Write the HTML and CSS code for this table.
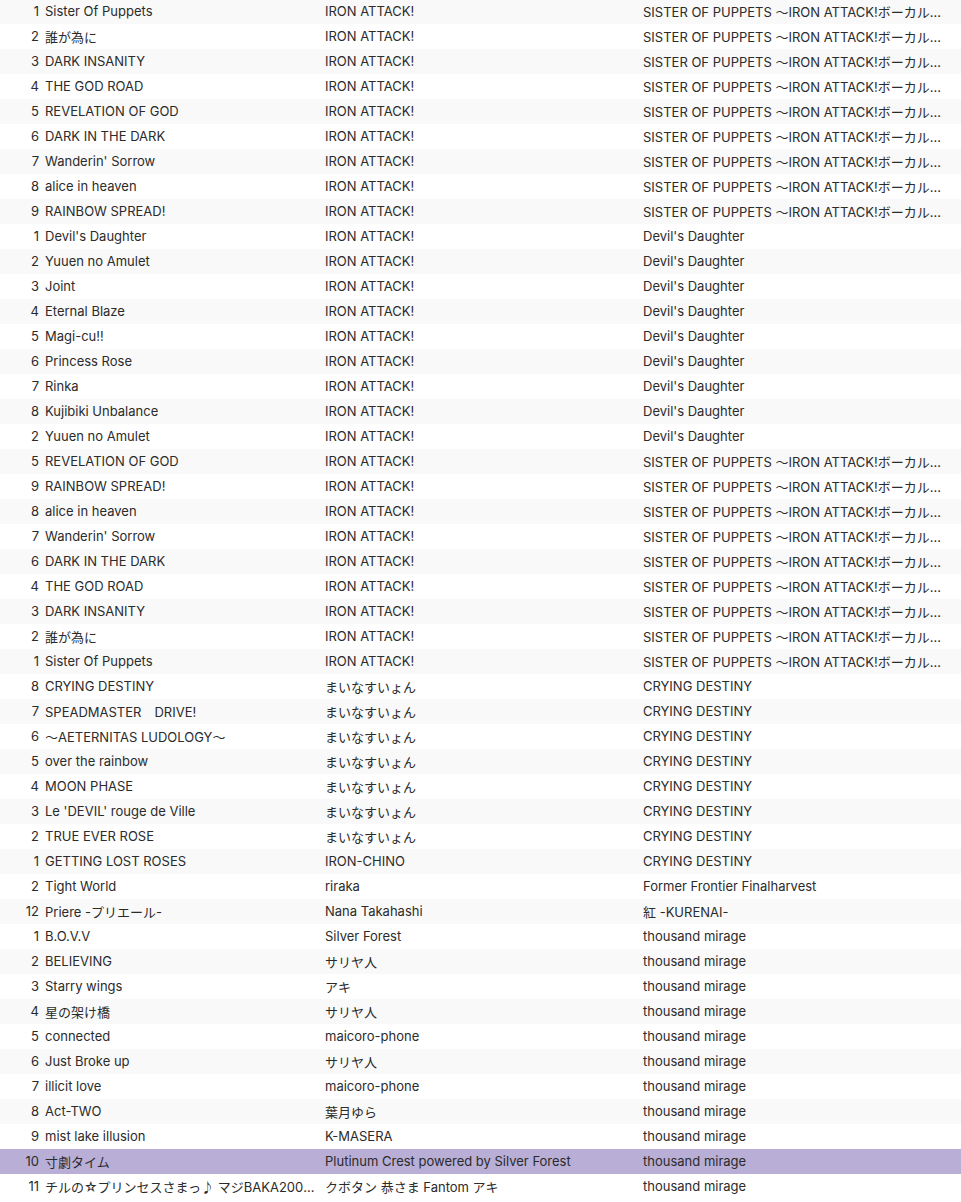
FILE: index.html
```html
<!DOCTYPE html>
<html>

<head>
    <title>Tracks</title>
    <link rel="stylesheet" href="styles.css">
</head>

<body>
    <div class="track-list" id="tracks"></div>

    <script>
        const SOP = 'SISTER OF PUPPETS 〜IRON ATTACK!ボーカルベスト〜';
        const DD = "Devil's Daughter";
        const CD = 'CRYING DESTINY';
        const TM = 'thousand mirage';
        const IA = 'IRON ATTACK!';
        const MI = 'まいなすいょん';

        // [number, title, artist, album]
        const tracks = [
            [1, 'Sister Of Puppets', IA, SOP],
            [2, '誰が為に', IA, SOP],
            [3, 'DARK INSANITY', IA, SOP],
            [4, 'THE GOD ROAD', IA, SOP],
            [5, 'REVELATION OF GOD', IA, SOP],
            [6, 'DARK IN THE DARK', IA, SOP],
            [7, "Wanderin' Sorrow", IA, SOP],
            [8, 'alice in heaven', IA, SOP],
            [9, 'RAINBOW SPREAD!', IA, SOP],
            [1, "Devil's Daughter", IA, DD],
            [2, 'Yuuen no Amulet', IA, DD],
            [3, 'Joint', IA, DD],
            [4, 'Eternal Blaze', IA, DD],
            [5, 'Magi-cu!!', IA, DD],
            [6, 'Princess Rose', IA, DD],
            [7, 'Rinka', IA, DD],
            [8, 'Kujibiki Unbalance', IA, DD],
            [2, 'Yuuen no Amulet', IA, DD],
            [5, 'REVELATION OF GOD', IA, SOP],
            [9, 'RAINBOW SPREAD!', IA, SOP],
            [8, 'alice in heaven', IA, SOP],
            [7, "Wanderin' Sorrow", IA, SOP],
            [6, 'DARK IN THE DARK', IA, SOP],
            [4, 'THE GOD ROAD', IA, SOP],
            [3, 'DARK INSANITY', IA, SOP],
            [2, '誰が為に', IA, SOP],
            [1, 'Sister Of Puppets', IA, SOP],
            [8, 'CRYING DESTINY', MI, CD],
            [7, 'SPEADMASTER　DRIVE!', MI, CD],
            [6, '〜AETERNITAS LUDOLOGY〜', MI, CD],
            [5, 'over the rainbow', MI, CD],
            [4, 'MOON PHASE', MI, CD],
            [3, "Le 'DEVIL' rouge de Ville", MI, CD],
            [2, 'TRUE EVER ROSE', MI, CD],
            [1, 'GETTING LOST ROSES', 'IRON-CHINO', CD],
            [2, 'Tight World', 'riraka', 'Former Frontier Finalharvest'],
            [12, 'Priere -プリエール-', 'Nana Takahashi', '紅 -KURENAI-'],
            [1, 'B.O.V.V', 'Silver Forest', TM],
            [2, 'BELIEVING', 'サリヤ人', TM],
            [3, 'Starry wings', 'アキ', TM],
            [4, '星の架け橋', 'サリヤ人', TM],
            [5, 'connected', 'maicoro-phone', TM],
            [6, 'Just Broke up', 'サリヤ人', TM],
            [7, 'illicit love', 'maicoro-phone', TM],
            [8, 'Act-TWO', '葉月ゆら', TM],
            [9, 'mist lake illusion', 'K-MASERA', TM],
            [10, '寸劇タイム', 'Plutinum Crest powered by Silver Forest', TM],
            [11, 'チルの☆プリンセスさまっ♪ マジBAKA2000%', 'クボタン 恭さま Fantom アキ', TM]
        ];

        const current = 46;
        const list = document.getElementById('tracks');

        tracks.forEach((t, i) => {
            const row = document.createElement('div');
            row.className = 'track' + (i === current ? ' playing' : '');
            row.innerHTML = `
                <span class="num">${t[0]}</span>
                <span class="cell">${t[1]}</span>
                <span class="cell">${t[2]}</span>
                <span class="cell album">${t[3]}</span>
            `;
            list.appendChild(row);
        });
    </script>
</body>

</html>
```

FILE: styles.css
```css
body {
    margin: 0;
    font-family: Inter, "Noto Sans CJK JP", sans-serif;
    font-size: 13px;
    color: #2b2b2b;
    background: #ffffff;
}

.track-list {
    margin-top: -1px;
}

.track {
    display: grid;
    grid-template-columns: 39px 280px 318px 1fr;
    box-sizing: border-box;
    height: 25px;
    padding-bottom: 1px;
    align-items: center;
}

.track:nth-child(odd) {
    background-color: #f9f9f9;
}

.track.playing {
    background-color: #b8aed6;
}

.num {
    text-align: right;
}

.cell {
    padding-left: 6px;
    padding-right: 4px;
    white-space: nowrap;
    overflow: hidden;
    text-overflow: ellipsis;
}

.album {
    padding-right: 10px;
}
```
